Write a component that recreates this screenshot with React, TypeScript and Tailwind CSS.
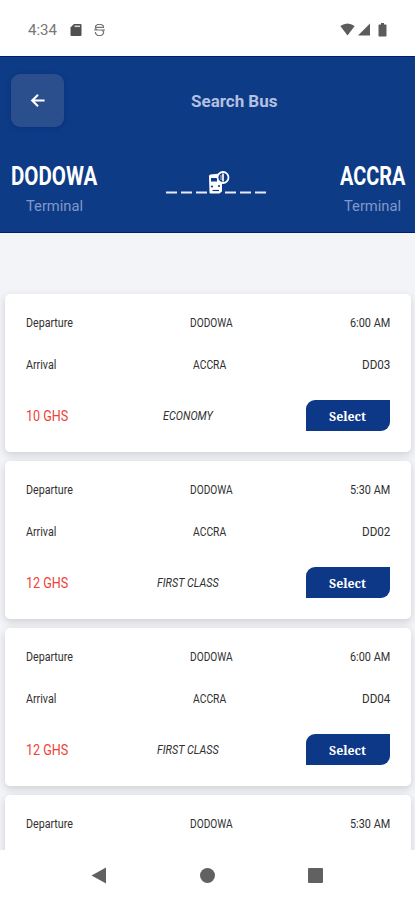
import React, { useLayoutEffect, useRef, useState } from "react";

type Trip = {
  from: string;
  to: string;
  time: string;
  bus?: string;
  price?: string;
  seat?: string;
  seatWidth?: number;
};

const trips: Trip[] = [
  { from: "DODOWA", to: "ACCRA", time: "6:00 AM", bus: "DD03", price: "10 GHS", seat: "ECONOMY", seatWidth: 50 },
  { from: "DODOWA", to: "ACCRA", time: "5:30 AM", bus: "DD02", price: "12 GHS", seat: "FIRST CLASS", seatWidth: 62 },
  { from: "DODOWA", to: "ACCRA", time: "6:00 AM", bus: "DD04", price: "12 GHS", seat: "FIRST CLASS", seatWidth: 62 },
  { from: "DODOWA", to: "ACCRA", time: "5:30 AM" },
];

// Squeezes a label horizontally to get a condensed face
function Condensed({
  width,
  className = "",
  children,
}: {
  width: number;
  className?: string;
  children: React.ReactNode;
}) {
  const ref = useRef<HTMLSpanElement>(null);
  const [scale, setScale] = useState(1);

  useLayoutEffect(() => {
    if (ref.current) {
      setScale(width / ref.current.offsetWidth);
    }
  }, [width, children]);

  return (
    <span className={`block whitespace-nowrap ${className}`} style={{ width }}>
      <span
        ref={ref}
        className="inline-block origin-left"
        style={{ transform: `scaleX(${scale})` }}
      >
        {children}
      </span>
    </span>
  );
}

function StatusBar() {
  return (
    <div className="flex h-[56px] shrink-0 items-center justify-between bg-white px-[28px] pt-[3px] text-[#5c5c5c]">
      <div className="flex items-center">
        <Condensed width={29} className="pt-[2px] text-[14.5px] leading-[16px] text-[#777777]">
          4:34
        </Condensed>
        <svg className="ml-[13px] h-[14px] w-[12px]" viewBox="0 0 12 14">
          <path d="M4 1h6.500q1 0 1 1v10q0 1-1 1h-9q-1 0-1-1V4.500z" fill="#505050" />
          <path d="M4.500 3.300h5.500" stroke="#d5d5d5" strokeWidth="1.600" />
        </svg>
        <svg className="ml-[12px] h-[14px] w-[11px]" viewBox="0 0 11 14" fill="none" stroke="#777777" strokeWidth="1.200">
          <path d="M9.500 4V3L7.500 1.500h-4L1.500 3v2.500L3 7h5l1.500 1.500v2L7.500 12.500h-4L1.500 10.500V9M1 4.300h9M0 7h11" />
        </svg>
      </div>
      <div className="flex items-center">
        <svg className="h-[13px] w-[15px]" viewBox="0 0 15 13">
          <path d="M.3 3Q7.500-2.200 14.700 3L7.500 12.500z" fill="currentColor" />
        </svg>
        <svg className="ml-[3px] h-[13px] w-[12px]" viewBox="0 0 12 13">
          <path d="M12 .5v12H0z" fill="currentColor" />
        </svg>
        <svg className="ml-[8px] h-[14px] w-[9px]" viewBox="0 0 9 14">
          <path d="M3 0h3v1.500h1.800q.7 0 .7.700v10.600q0 .7-.7.700H1.200q-.7 0-.7-.7V2.200q0-.7.700-.7H3z" fill="currentColor" />
        </svg>
      </div>
    </div>
  );
}

function BusRoute() {
  return (
    <svg className="h-[28px] w-[102px]" viewBox="0 0 102 28" fill="none">
      <path
        d="M0 24.500h11M15 24.500h11M30 24.500h11M59 24.500h11M74 24.500h11M89 24.500h11"
        stroke="#e8ecfa"
        strokeWidth="2"
      />
      <path
        d="M44.500 6.500l10-1 1.500 10v7.500q0 1-1 1.300L53.500 25.500h-9q-1 0-1-1L43 8.500q0-2 1.500-2z"
        fill="white"
      />
      <path d="M45 10h6v3.500h-6z" fill="#0d3b86" />
      <circle cx="46" cy="18.500" r="1.100" fill="#0d3b86" />
      <circle cx="53" cy="18" r="1.100" fill="#0d3b86" />
      <path d="M46.500 22.500h6.500" stroke="#0d3b86" strokeWidth="1.200" />
      <circle cx="57" cy="9.500" r="5.500" fill="#0d3b86" stroke="white" strokeWidth="1.800" />
      <path d="M57 5.500v8" stroke="white" strokeWidth="1.700" />
      <path d="M55 7v5" stroke="white" strokeWidth=".7" />
    </svg>
  );
}

function Header() {
  return (
    <header className="h-[177px] shrink-0 border-y border-[#061a78] bg-[#0d3b86] font-[Roboto,sans-serif]">
      <div className="flex items-center px-[11px] pt-[17px]">
        <button className="flex h-[53px] w-[53px] items-center justify-center rounded-[9px] bg-[#2b4f8d] shadow-[0_1px_5px_rgba(0,20,100,0.25)]">
          <svg className="h-[15px] w-[16px]" viewBox="0 0 16 16" fill="none" stroke="white" strokeWidth="2.200">
            <path d="M15 8H2.500M8 1.800 1.800 8 8 14.200" />
          </svg>
        </button>
        <h1 className="ml-[127px] pt-[2px] text-[16px] font-bold leading-[20px] text-[#b4c0e0]">
          <Condensed width={86}>Search Bus</Condensed>
        </h1>
      </div>
      <div className="flex items-start justify-between pl-[11px] pr-[10px] pt-[34px]">
        <div className="flex flex-col items-center">
          <Condensed width={86} className="text-[26px] font-bold leading-[30px] text-white">
            DODOWA
          </Condensed>
          <Condensed width={57} className="mt-[5px] text-[15.5px] leading-[20px] text-[#8298c8]">
            Terminal
          </Condensed>
        </div>
        <div className="mr-[4px] pt-[7px]">
          <BusRoute />
        </div>
        <div className="flex flex-col items-center">
          <Condensed width={65} className="text-[26px] font-bold leading-[30px] text-white">
            ACCRA
          </Condensed>
          <Condensed width={57} className="mt-[5px] text-[15.5px] leading-[20px] text-[#8298c8]">
            Terminal
          </Condensed>
        </div>
      </div>
    </header>
  );
}

function TripCard({ trip }: { trip: Trip }) {
  return (
    <div className="h-[158px] shrink-0 rounded-[5px] bg-white px-[21px] pt-[20px] text-[12.5px] leading-[18px] text-[#303030] shadow-[0_3px_8px_rgba(0,0,0,0.15)]">
      <div className="flex justify-between">
        <Condensed width={47}>Departure</Condensed>
        <Condensed width={43} className="mr-[1px]">{trip.from}</Condensed>
        <Condensed width={40}>{trip.time}</Condensed>
      </div>
      {trip.bus && (
        <div className="mt-[24px] flex justify-between">
          <Condensed width={30}>Arrival</Condensed>
          <Condensed width={33}>{trip.to}</Condensed>
          <Condensed width={28}>{trip.bus}</Condensed>
        </div>
      )}
      {trip.price && (
        <div className="mt-[26px] flex items-center justify-between">
          <Condensed width={42} className="text-[15px] text-[#ee4238]">
            {trip.price}
          </Condensed>
          <Condensed width={trip.seatWidth ?? 62} className="ml-[1px] italic">
            {trip.seat}
          </Condensed>
          <button className="flex h-[31px] w-[84px] items-center justify-center rounded-tl-[9px] rounded-br-[9px] bg-[#0d3787] pr-[1px] font-['Noto_Serif','DejaVu_Serif',serif] text-[13px] font-bold text-white">
            <Condensed width={37}>Select</Condensed>
          </button>
        </div>
      )}
    </div>
  );
}

function NavBar() {
  return (
    <nav className="grid h-[50px] shrink-0 grid-cols-3 items-center bg-white px-[45px] text-[#616161]">
      <svg className="mx-auto h-[17px] w-[16px]" viewBox="0 0 16 17">
        <path d="M15 .5v16L.5 8.500z" fill="currentColor" />
      </svg>
      <span className="mx-auto h-[15px] w-[15px] rounded-full bg-[#616161]" />
      <span className="mx-auto h-[15px] w-[15px] rounded-[1px] bg-[#616161]" />
    </nav>
  );
}

export default function App() {
  return (
    <div className="flex h-[900px] w-[415px] flex-col overflow-hidden bg-[#f2f4f8] font-[Roboto,sans-serif]">
      <StatusBar />
      <Header />
      <main className="flex min-h-0 flex-1 flex-col gap-[9px] overflow-hidden pl-[5px] pr-[4px] pt-[61px]">
        {trips.map((trip, i) => (
          <TripCard key={i} trip={trip} />
        ))}
      </main>
      <NavBar />
    </div>
  );
}
